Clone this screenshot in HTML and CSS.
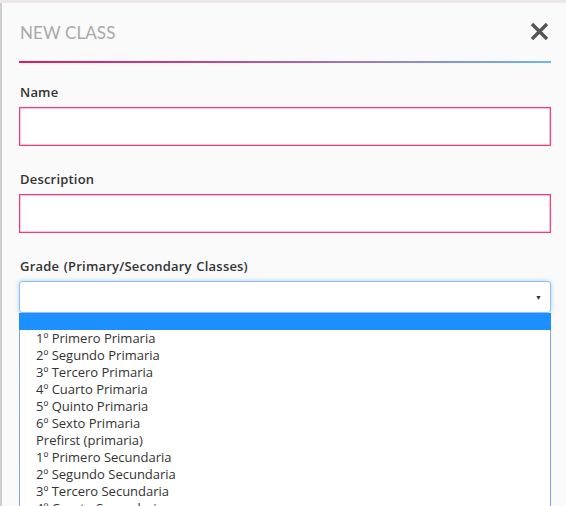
FILE: index.html
```html
<!DOCTYPE html>
<html>
<head>
<meta charset="utf-8">
<link rel="stylesheet" href="styles.css">
</head>
<body>
<div class="modal">
  <div class="header">
    <div class="title">NEW CLASS</div>
    <svg class="close" width="19" height="19" viewBox="0 0 19 19"><path d="M2 2 L17 17 M17 2 L2 17" stroke="#555" stroke-width="3.4" stroke-linecap="butt" fill="none"/></svg>
  </div>
  <div class="rule"></div>
  <div class="form">
    <div class="group">
      <div class="label">Name</div>
      <div class="input"></div>
    </div>
    <div class="group">
      <div class="label">Description</div>
      <div class="input"></div>
    </div>
    <div class="group">
      <div class="label">Grade (Primary/Secondary Classes)</div>
      <div class="select-wrap">
        <div class="select"><span class="arrow">&#9660;</span></div>
        <ul class="options">
          <li class="active">&nbsp;</li>
          <li>1º Primero Primaria</li>
          <li>2º Segundo Primaria</li>
          <li>3º Tercero Primaria</li>
          <li>4º Cuarto Primaria</li>
          <li>5º Quinto Primaria</li>
          <li>6º Sexto Primaria</li>
          <li>Prefirst (primaria)</li>
          <li>1º Primero Secundaria</li>
          <li>2º Segundo Secundaria</li>
          <li>3º Tercero Secundaria</li>
          <li>4º Cuarto Secundaria</li>
        </ul>
      </div>
    </div>
  </div>
</div>
</body>
</html>
```
FILE: styles.css
```css
html, body {
  margin: 0;
  padding: 0;
}
body {
  background: #ece7ea;
  font-family: Lato, "Open Sans", sans-serif;
  height: 506px;
  overflow: hidden;
}
.modal {
  margin-top: 3px;
  height: 503px;
  background: #fafafa;
  border-left: 2px solid #cdcdcd;
  padding: 0 15px 0 17px;
  box-sizing: border-box;
}
.header {
  height: 58px;
  display: flex;
  align-items: center;
  justify-content: space-between;
  padding: 0 2px 0 1px;
}
.title {
  font-size: 17px;
  color: #a9a9a9;
  letter-spacing: 0.1px;
}
.close {
  display: block;
  margin-top: -1px;
}
.rule {
  height: 2px;
  background: linear-gradient(to right, #e8185d 0%, #c24684 35%, #9a7bc4 65%, #6cb6f6 100%);
}
.form {
  padding-top: 21px;
}
.group {
  margin-bottom: 25px;
}
.label {
  font-family: "Open Sans", Lato, sans-serif;
  font-size: 13px;
  font-weight: 600;
  color: #333;
  line-height: 16px;
  margin-bottom: 7px;
  padding-left: 1px;
  letter-spacing: 0.2px;
  word-spacing: 1px;
}
.input {
  height: 37px;
  background: #fff;
  border: 1px solid #ee3d78;
  box-shadow: inset 0 0 0 0.5px #f58ab0;
}
.select-wrap {
  position: relative;
  margin-top: 1px;
}
.select {
  height: 30px;
  background: #fff;
  border: 1px solid #8fc1ec;
  border-radius: 3px;
  box-shadow: 0 0 4px rgba(102, 175, 233, 0.55);
  position: relative;
}
.arrow {
  position: absolute;
  right: 8px;
  top: 11px;
  font-size: 7px;
  color: #333;
}
.options {
  position: absolute;
  left: 0;
  right: 0;
  top: 32px;
  margin: 0;
  padding: 0;
  list-style: none;
  background: #fff;
  border: 1px solid #7fa6e2;
  border-top: none;
}
.options li {
  height: 17px;
  line-height: 17px;
  font-family: "Open Sans", Lato, sans-serif;
  font-size: 13px;
  color: #333;
  padding-left: 16px;
  white-space: nowrap;
}
.options li.active {
  background: #1e8fff;
  margin: 0 -1px;
}
```
